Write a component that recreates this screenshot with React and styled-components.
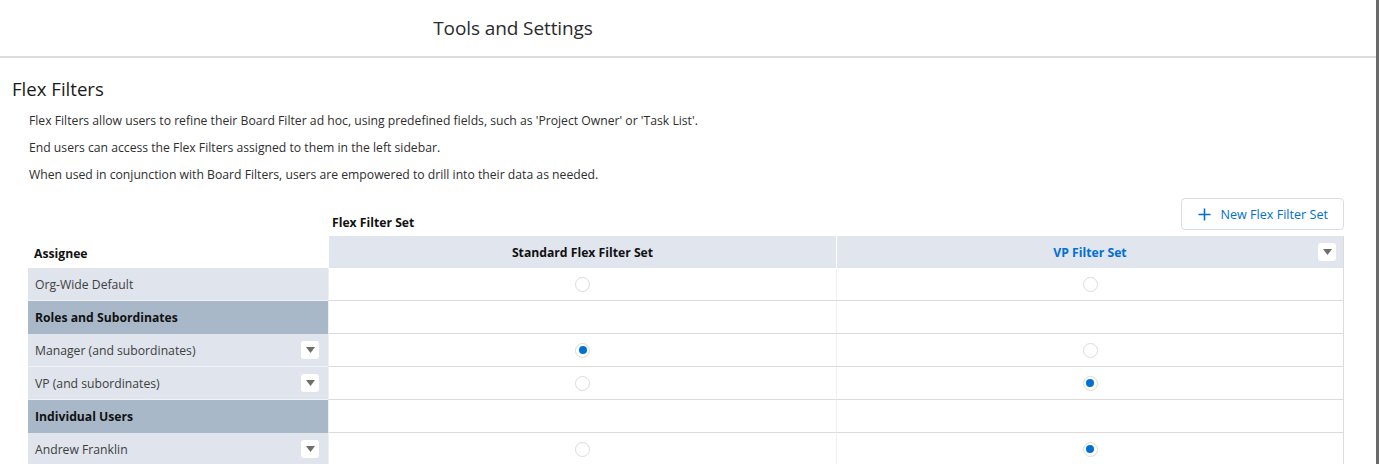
import React from 'react';
import styled, { createGlobalStyle } from 'styled-components';

const GlobalStyle = createGlobalStyle`
  html, body {
    margin: 0;
    padding: 0;
    background: #ffffff;
  }
  body {
    font-family: 'Open Sans', 'Noto Sans', 'Liberation Sans', sans-serif;
    color: #222222;
  }
`;

const rows = [
  { kind: 'item', label: 'Org-Wide Default', menu: false, pick: null },
  { kind: 'section', label: 'Roles and Subordinates' },
  { kind: 'item', label: 'Manager (and subordinates)', menu: true, pick: 0 },
  { kind: 'item', label: 'VP (and subordinates)', menu: true, pick: 1 },
  { kind: 'section', label: 'Individual Users' },
  { kind: 'item', label: 'Andrew Franklin', menu: true, pick: 1 },
];

const sets = [
  { name: 'Standard Flex Filter Set', link: false },
  { name: 'VP Filter Set', link: true },
];

const Caret = () => (
  <svg width="9" height="6" viewBox="0 0 9 6">
    <path d="M0 0 L9 0 L4.5 6 Z" fill="#706e6b" />
  </svg>
);

const App = () => {
  return (
    <>
      <GlobalStyle />
      <Page>
        <Panel>
          <HeaderBar>
            <Title>Tools and Settings</Title>
          </HeaderBar>
          <Content>
            <Heading>Flex Filters</Heading>
            <Intro>
              <p>
                Flex Filters allow users to refine their Board Filter ad hoc, using predefined
                fields, such as 'Project Owner' or 'Task List'.
              </p>
              <p>End users can access the Flex Filters assigned to them in the left sidebar.</p>
              <p>
                When used in conjunction with Board Filters, users are empowered to drill into
                their data as needed.
              </p>
            </Intro>
            <Grid>
              <TopCell />
              <SetLabel>Flex Filter Set</SetLabel>
              <ButtonCell>
                <NewButton>
                  <svg width="13" height="13" viewBox="0 0 13 13">
                    <path d="M6.5 0.5 V12.5 M0.5 6.5 H12.5" stroke="#0070d2" strokeWidth="1.6" />
                  </svg>
                  New Flex Filter Set
                </NewButton>
              </ButtonCell>

              <AssigneeHead>Assignee</AssigneeHead>
              {sets.map((s, i) => (
                <SetHead key={s.name} $last={i === sets.length - 1}>
                  <SetName $link={s.link}>{s.name}</SetName>
                  {s.link && (
                    <HeadMenu>
                      <Caret />
                    </HeadMenu>
                  )}
                </SetHead>
              ))}

              {rows.map((r) => (
                <React.Fragment key={r.label}>
                  {r.kind === 'section' ? (
                    <SectionCell>{r.label}</SectionCell>
                  ) : (
                    <AssigneeCell>
                      <span>{r.label}</span>
                      {r.menu && (
                        <RowMenu>
                          <Caret />
                        </RowMenu>
                      )}
                    </AssigneeCell>
                  )}
                  {sets.map((s, i) => (
                    <ValueCell key={s.name} $last={i === sets.length - 1}>
                      {r.kind === 'item' && <Radio $on={r.pick === i} />}
                    </ValueCell>
                  ))}
                </React.Fragment>
              ))}
            </Grid>
          </Content>
        </Panel>
        <Edge />
      </Page>
    </>
  );
};

const Page = styled.div`
  display: flex;
  width: 1379px;
  height: 464px;
  overflow: hidden;
`;

const Panel = styled.div`
  width: 1376px;
  background: #ffffff;
`;

const Edge = styled.div`
  width: 3px;
  background: #6a6a6a;
`;

const HeaderBar = styled.div`
  height: 56px;
  display: flex;
  align-items: center;
  justify-content: center;
  padding-right: 350px;
  border-bottom: 2px solid #dcdcdc;
`;

const Title = styled.h1`
  margin: 0;
  font-size: 19px;
  font-weight: 400;
  color: #2b2b2b;
  letter-spacing: -0.1px;
`;

const Content = styled.div`
  padding: 19px 0 0 12px;
`;

const Heading = styled.h2`
  margin: 0;
  font-size: 18.6px;
  line-height: 24px;
  font-weight: 400;
  color: #1a1a1a;
`;

const Intro = styled.div`
  padding: 6px 0 0 17px;

  p {
    margin: 0;
    font-size: 12.2px;
    line-height: 27px;
    color: #2e2e2e;
  }
`;

const Grid = styled.div`
  display: grid;
  grid-template-columns: 300px 508px 508px;
  margin: 10px 0 0 16px;
`;

const TopCell = styled.div``;

const SetLabel = styled.div`
  align-self: end;
  padding: 0 0 5px 4px;
  font-size: 12.2px;
  font-weight: 700;
  color: #111111;
`;

const ButtonCell = styled.div`
  display: flex;
  justify-content: flex-end;
  padding-bottom: 6px;
`;

const NewButton = styled.button`
  display: inline-flex;
  align-items: center;
  gap: 9px;
  height: 32px;
  padding: 0 15px 0 16px;
  background: #ffffff;
  border: 1px solid #d8dde6;
  border-radius: 4px;
  font-family: inherit;
  font-size: 12.6px;
  color: #0070d2;
`;

const cellBase = `
  height: 32px;
  display: flex;
  align-items: center;
  box-sizing: border-box;
  font-size: 12.2px;
`;

const AssigneeHead = styled.div`
  ${cellBase}
  padding: 4px 0 0 6px;
  font-weight: 700;
  color: #111111;
  border-bottom: 1px solid #ffffff;
`;

const SetHead = styled.div`
  ${cellBase}
  position: relative;
  justify-content: center;
  background: #e0e5ee;
  border-left: 1px solid #ffffff;
  border-right: ${(p) => (p.$last ? '1px solid #dddbda' : 'none')};
  font-weight: 700;
`;

const SetName = styled.span`
  color: ${(p) => (p.$link ? '#0070d2' : '#111111')};
`;

const menuBase = `
  width: 18px;
  height: 18px;
  display: flex;
  align-items: center;
  justify-content: center;
  background: #ffffff;
  border-radius: 3px;
`;

const HeadMenu = styled.span`
  ${menuBase}
  position: absolute;
  right: 7px;
  top: 7px;
`;

const AssigneeCell = styled.div`
  ${cellBase}
  height: 33px;
  justify-content: space-between;
  padding: 0 9px 0 7px;
  background: #dfe4ed;
  border-bottom: 1px solid #eef1f5;
  color: #3e3e3c;
`;

const RowMenu = styled.span`
  ${menuBase}
`;

const SectionCell = styled.div`
  ${cellBase}
  height: 33px;
  padding-left: 7px;
  background: #a9b8c8;
  font-weight: 700;
  color: #111111;
`;

const ValueCell = styled.div`
  ${cellBase}
  height: 33px;
  justify-content: center;
  border-bottom: 1px solid #dddbda;
  border-left: 1px solid #f0f0f0;
  border-right: ${(p) => (p.$last ? '1px solid #dddbda' : 'none')};
`;

const Radio = styled.span`
  width: 15px;
  height: 15px;
  box-sizing: border-box;
  border-radius: 50%;
  border: 1px solid #dddbda;
  background: #ffffff;
  display: flex;
  align-items: center;
  justify-content: center;

  &::after {
    content: '';
    width: 8px;
    height: 8px;
    border-radius: 50%;
    background: #0070d2;
    display: ${(p) => (p.$on ? 'block' : 'none')};
  }
`;

export default App;
